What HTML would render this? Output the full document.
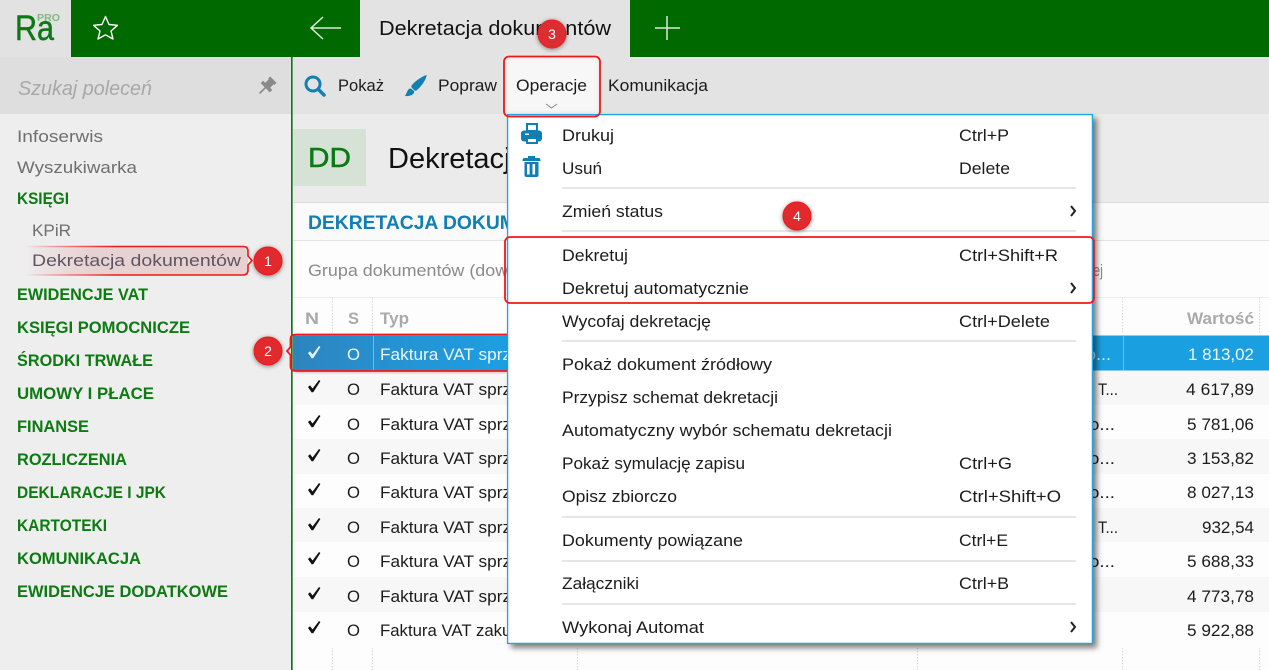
<!DOCTYPE html>
<html lang="pl"><head><meta charset="utf-8"><title>Dekretacja dokumentów</title>
<style>
html,body{margin:0;padding:0;width:1269px;height:670px;overflow:hidden;background:#fff}
svg{display:block}
text{font-family:"Liberation Sans",sans-serif;font-size:17px;fill:#1c1c1c;white-space:pre}
.g{fill:#0d7a12;font-weight:bold;font-size:16.5px}
.s{fill:#6f6f6f}
.h{fill:#aaa;font-weight:bold}
.w{fill:#eef5fb}
.n{fill:#fff;font-size:14px;text-anchor:middle}
</style></head><body>
<svg width="1269" height="670" viewBox="0 0 1269 670" xmlns="http://www.w3.org/2000/svg">
<defs>
<filter id="ms" x="-5%" y="-5%" width="112%" height="112%"><feDropShadow dx="4" dy="4" stdDeviation="3" flood-color="#000" flood-opacity=".5"/></filter>
<filter id="cs" x="-50%" y="-50%" width="200%" height="200%"><feDropShadow dx="0" dy="1" stdDeviation="2.5" flood-color="#000" flood-opacity=".45"/></filter>
<filter id="gl" x="-10%" y="-30%" width="120%" height="160%"><feGaussianBlur stdDeviation="3"/></filter>
<filter id="rg" x="-5%" y="-30%" width="110%" height="160%"><feGaussianBlur stdDeviation="1.500"/></filter>
<linearGradient id="fd" x1="0" x2="1" y1="0" y2="0"><stop offset="0" stop-color="#e8c8c8" stop-opacity="0"/><stop offset=".3" stop-color="#e6d2d2"/><stop offset="1" stop-color="#e6d0d0"/></linearGradient>
<linearGradient id="fl" x1="0" x2="1" y1="0" y2="0"><stop offset="0" stop-color="#f01818" stop-opacity="0"/><stop offset=".4" stop-color="#f01818"/></linearGradient>
<linearGradient id="sel" gradientUnits="userSpaceOnUse" x1="293" x2="507" y1="0" y2="0"><stop offset="0" stop-color="#2e84bd"/><stop offset=".5" stop-color="#2593d3"/><stop offset="1" stop-color="#1c9fe2"/></linearGradient>
<clipPath id="rowclip"><rect x="293" y="296" width="976" height="374"/></clipPath>
<path id="ck" d="M308 387 L310 385.300 L312.600 388.500 L319 380 L320.400 381 L313.200 392.300 L311.600 392.300 Z"/>
</defs>

<!-- top bar -->
<rect width="1269" height="57" fill="#006a00"/>
<rect width="71" height="57" fill="#e2e2e2"/>
<text x="15" y="40" style="font-size:35px;fill:#0b7a14;stroke:#0b7a14;stroke-width:.5" textLength="39" lengthAdjust="spacingAndGlyphs">Ra</text>
<text x="37" y="21" style="font-size:10.5px;font-weight:bold;fill:#7fbb7f" textLength="23" lengthAdjust="spacingAndGlyphs">PRO</text>
<path d="M105.500 16.500 L109 24.500 L117.500 25.300 L111 31 L113 39 L105.500 34.800 L98 39 L100 31 L93.500 25.300 L102 24.500 Z" fill="none" stroke="#fff" stroke-width="1.400" stroke-linejoin="round"/>
<rect x="360" width="270" height="57" fill="#e3e3e3"/>
<path d="M341 28 H311.500 M323 17 L311 28 L323 39" fill="none" stroke="#dcebdc" stroke-width="1.500"/>
<path d="M667 16 V40 M655 28 H680" fill="none" stroke="#dcebdc" stroke-width="1.500"/>
<text x="379" y="35" style="font-size:20px;fill:#111" textLength="232" lengthAdjust="spacingAndGlyphs">Dekretacja dokumentów</text>

<!-- sidebar -->
<rect y="57" width="291" height="613" fill="#eeeeee"/>
<rect y="57" width="291" height="57" fill="#dedede"/>
<rect x="291" y="57" width="1.700" height="613" fill="#13791a"/>
<text x="18" y="95" style="font-size:20px;font-style:italic;fill:#a8a8a8" textLength="134" lengthAdjust="spacingAndGlyphs">Szukaj poleceń</text>
<g transform="rotate(45 267 86)" fill="#8a8a8a"><rect x="262.500" y="77" width="9" height="3"/><rect x="263.500" y="79" width="7" height="7"/><rect x="260.500" y="85" width="13" height="3.500"/><rect x="266.200" y="88" width="1.600" height="8.500"/></g>
<text x="17" y="142" class="s" textLength="86" lengthAdjust="spacingAndGlyphs">Infoserwis</text>
<text x="17" y="173" class="s" textLength="120" lengthAdjust="spacingAndGlyphs">Wyszukiwarka</text>
<text x="17" y="204" class="g" textLength="52" lengthAdjust="spacingAndGlyphs">KSIĘGI</text>
<text x="32" y="236" class="s" textLength="39" lengthAdjust="spacingAndGlyphs">KPiR</text>
<rect x="24" y="246" width="224" height="29" fill="url(#fd)"/>
<path d="M24 246.500 H243 Q248 246.500 248 251 V256 L252 260.500 L248 265 V270 Q248 275 243 275 H24" fill="none" stroke="url(#fl)" stroke-width="1.600"/>
<text x="32" y="266" fill="#5f5560" style="fill:#5f5560" textLength="209" lengthAdjust="spacingAndGlyphs">Dekretacja dokumentów</text>
<text x="17" y="300" class="g" textLength="131" lengthAdjust="spacingAndGlyphs">EWIDENCJE VAT</text>
<text x="17" y="333" class="g" textLength="173" lengthAdjust="spacingAndGlyphs">KSIĘGI POMOCNICZE</text>
<text x="17" y="366" class="g" textLength="136" lengthAdjust="spacingAndGlyphs">ŚRODKI TRWAŁE</text>
<text x="17" y="399" class="g" textLength="137" lengthAdjust="spacingAndGlyphs">UMOWY I PŁACE</text>
<text x="17" y="432" class="g" textLength="72" lengthAdjust="spacingAndGlyphs">FINANSE</text>
<text x="17" y="465" class="g" textLength="110" lengthAdjust="spacingAndGlyphs">ROZLICZENIA</text>
<text x="17" y="498" class="g" textLength="149" lengthAdjust="spacingAndGlyphs">DEKLARACJE I JPK</text>
<text x="17" y="531" class="g" textLength="90" lengthAdjust="spacingAndGlyphs">KARTOTEKI</text>
<text x="17" y="564" class="g" textLength="124" lengthAdjust="spacingAndGlyphs">KOMUNIKACJA</text>
<text x="17" y="597" class="g" textLength="211" lengthAdjust="spacingAndGlyphs">EWIDENCJE DODATKOWE</text>

<!-- toolbar + header -->
<rect x="293" y="57" width="976" height="57" fill="#e3e3e3"/>
<rect x="293" y="114" width="976" height="88" fill="#ebebeb"/>
<rect x="293" y="202" width="976" height="1" fill="#dcdcdc"/>
<rect x="293" y="203" width="976" height="37" fill="#fafafa"/>
<rect x="293" y="240" width="976" height="1" fill="#e4e4e4"/>
<rect x="293" y="241" width="976" height="429" fill="#fdfdfd"/>
<rect x="293" y="297" width="976" height="1" fill="#ececec"/>
<circle cx="313" cy="84" r="7" fill="none" stroke="#1380b5" stroke-width="3"/>
<path d="M318.500 89.500 L324 95" stroke="#1380b5" stroke-width="3.500" stroke-linecap="round"/>
<text x="338" y="91" textLength="46" lengthAdjust="spacingAndGlyphs">Pokaż</text>
<path d="M426.500 75 C424 75.500 416 80 412 85 C411 86 411 87 412 88 L414 90 C415 91 416 91 417 90 C422 86 427 78 426.500 75 Z M411 88.500 C407 88.500 407.500 92.500 405 96 C410 96.500 415 94.500 414 91 Z" fill="#1380b5"/>
<text x="438" y="91" textLength="59" lengthAdjust="spacingAndGlyphs">Popraw</text>
<rect x="505" y="57" width="94" height="57" fill="#f7f7f7" filter="url(#gl)"/>
<text x="516" y="91" textLength="71" lengthAdjust="spacingAndGlyphs">Operacje</text>
<path d="M546 104 L551.500 108 L557 104" fill="none" stroke="#888" stroke-width="1"/>
<text x="608" y="91" textLength="100" lengthAdjust="spacingAndGlyphs">Komunikacja</text>
<rect x="293" y="129" width="73" height="57" fill="#d6e2d6"/>
<text x="308" y="167" style="font-size:28px;fill:#0b7a14;stroke:#0b7a14;stroke-width:.5" textLength="43" lengthAdjust="spacingAndGlyphs">DD</text>
<text x="388" y="168" style="font-size:29px;fill:#111">Dekretacja dokumentów</text>
<text x="308" y="229" style="font-size:19.3px;font-weight:bold;fill:#0f7fb5">DEKRETACJA DOKUMENTÓW</text>
<text x="308" y="276" style="fill:#8a8a8a" textLength="240" lengthAdjust="spacingAndGlyphs">Grupa dokumentów (dowolna)</text>
<text x="1093" y="276" style="fill:#8a8a8a" textLength="10" lengthAdjust="spacingAndGlyphs">ej</text>

<!-- table -->
<g clip-path="url(#rowclip)">
<rect x="293" y="370" width="976" height="35" fill="#f7f7f7"/>
<rect x="293" y="439" width="976" height="35" fill="#f7f7f7"/>
<rect x="293" y="508" width="976" height="34" fill="#f7f7f7"/>
<rect x="293" y="577" width="976" height="35" fill="#f7f7f7"/>
<rect x="293" y="335.500" width="976" height="35" fill="#1a9fe0"/>
<rect x="293" y="335.500" width="214" height="35" fill="url(#sel)"/>
<rect x="373" y="336" width="1" height="34" fill="#6fbfea"/>
<rect x="1123" y="336" width="1" height="34" fill="#6fbfea"/>
<path d="M332.500 298 V333 M372.500 298 V333 M1122.500 298 V333 M1259.500 298 V333 M332.500 648 V670 M372.500 648 V670 M577.500 648 V670 M917.500 648 V670 M1122.500 648 V670 M1259.500 648 V670" stroke="#d6d6d6" stroke-dasharray="1.500 1.500" fill="none"/>
<text x="305" y="324" class="h" textLength="14" lengthAdjust="spacingAndGlyphs">N</text>
<text x="348" y="324" class="h" textLength="11" lengthAdjust="spacingAndGlyphs">S</text>
<text x="380" y="324" class="h" textLength="29" lengthAdjust="spacingAndGlyphs">Typ</text>
<text x="1187" y="324" class="h" textLength="67" lengthAdjust="spacingAndGlyphs">Wartość</text>

<use href="#ck" y="-34" fill="#e8f4fb"/>
<use href="#ck" y="0" fill="#111"/>
<use href="#ck" y="35" fill="#111"/>
<use href="#ck" y="69" fill="#111"/>
<use href="#ck" y="103" fill="#111"/>
<use href="#ck" y="138" fill="#111"/>
<use href="#ck" y="172" fill="#111"/>
<use href="#ck" y="207" fill="#111"/>
<use href="#ck" y="241" fill="#111"/>

<text x="347" y="360" class="w" textLength="13" lengthAdjust="spacingAndGlyphs">O</text>
<text x="347" y="395" textLength="13" lengthAdjust="spacingAndGlyphs">O</text>
<text x="347" y="430" textLength="13" lengthAdjust="spacingAndGlyphs">O</text>
<text x="347" y="464" textLength="13" lengthAdjust="spacingAndGlyphs">O</text>
<text x="347" y="498" textLength="13" lengthAdjust="spacingAndGlyphs">O</text>
<text x="347" y="533" textLength="13" lengthAdjust="spacingAndGlyphs">O</text>
<text x="347" y="567" textLength="13" lengthAdjust="spacingAndGlyphs">O</text>
<text x="347" y="602" textLength="13" lengthAdjust="spacingAndGlyphs">O</text>
<text x="347" y="636" textLength="13" lengthAdjust="spacingAndGlyphs">O</text>

<text x="380" y="360" class="w" textLength="177" lengthAdjust="spacingAndGlyphs">Faktura VAT sprzedaży</text>
<text x="380" y="395" textLength="177" lengthAdjust="spacingAndGlyphs">Faktura VAT sprzedaży</text>
<text x="380" y="430" textLength="177" lengthAdjust="spacingAndGlyphs">Faktura VAT sprzedaży</text>
<text x="380" y="464" textLength="177" lengthAdjust="spacingAndGlyphs">Faktura VAT sprzedaży</text>
<text x="380" y="498" textLength="177" lengthAdjust="spacingAndGlyphs">Faktura VAT sprzedaży</text>
<text x="380" y="533" textLength="177" lengthAdjust="spacingAndGlyphs">Faktura VAT sprzedaży</text>
<text x="380" y="567" textLength="177" lengthAdjust="spacingAndGlyphs">Faktura VAT sprzedaży</text>
<text x="380" y="602" textLength="177" lengthAdjust="spacingAndGlyphs">Faktura VAT sprzedaży</text>
<text x="380" y="636" textLength="150" lengthAdjust="spacingAndGlyphs">Faktura VAT zakupu</text>

<text x="1086" y="360" class="w" textLength="25" lengthAdjust="spacingAndGlyphs">o...</text>
<text x="1098" y="395" textLength="20" lengthAdjust="spacingAndGlyphs">T...</text>
<text x="1089" y="430" textLength="26" lengthAdjust="spacingAndGlyphs">o...</text>
<text x="1089" y="464" textLength="26" lengthAdjust="spacingAndGlyphs">o...</text>
<text x="1089" y="498" textLength="26" lengthAdjust="spacingAndGlyphs">o...</text>
<text x="1098" y="533" textLength="20" lengthAdjust="spacingAndGlyphs">T...</text>
<text x="1089" y="567" textLength="26" lengthAdjust="spacingAndGlyphs">o...</text>

<text x="1188" y="360" class="w" textLength="66" lengthAdjust="spacingAndGlyphs">1 813,02</text>
<text x="1186" y="395" textLength="68" lengthAdjust="spacingAndGlyphs">4 617,89</text>
<text x="1187" y="430" textLength="67" lengthAdjust="spacingAndGlyphs">5 781,06</text>
<text x="1187" y="464" textLength="67" lengthAdjust="spacingAndGlyphs">3 153,82</text>
<text x="1187" y="498" textLength="67" lengthAdjust="spacingAndGlyphs">8 027,13</text>
<text x="1202" y="533" textLength="52" lengthAdjust="spacingAndGlyphs">932,54</text>
<text x="1187" y="567" textLength="67" lengthAdjust="spacingAndGlyphs">5 688,33</text>
<text x="1187" y="602" textLength="67" lengthAdjust="spacingAndGlyphs">4 773,78</text>
<text x="1187" y="636" textLength="67" lengthAdjust="spacingAndGlyphs">5 922,88</text>
</g>

<!-- annotation 2 -->
<rect x="295" y="371" width="212" height="2" fill="#f5a0a0" filter="url(#rg)"/>
<path d="M507 334.500 H296 Q290.500 334.500 290.500 339 V347 L287 351 L290.500 355 V366 Q290.500 371 296 371 H507" fill="none" stroke="#f01818" stroke-width="1.800"/>

<!-- menu -->
<rect x="507" y="114" width="586" height="530" fill="#fff" filter="url(#ms)"/>
<rect x="507.600" y="114.600" width="584.800" height="528.800" fill="none" stroke="#1fa5e6" stroke-width="1.300"/>

<rect x="521" y="130.500" width="21" height="11" rx="3" fill="#0f7fb5"/>
<rect x="527" y="124" width="10" height="7" fill="#fff" stroke="#0f7fb5" stroke-width="2"/>
<rect x="527" y="138" width="10" height="5" fill="#fff" stroke="#0f7fb5" stroke-width="2"/>
<rect x="525" y="133.500" width="4" height="1.500" fill="#fff"/>
<path d="M528 156 H535 V158 H539 Q540.500 158 540.500 161 H522.500 Q522.500 158 524 158 H528 Z M524.500 162 H538.500 V175 Q538.500 177 536.500 177 H526.500 Q524.500 177 524.500 175 Z" fill="#0f7fb5"/>
<rect x="527" y="164" width="2.600" height="10.500" fill="#fff"/>
<rect x="532.500" y="164" width="2.600" height="10.500" fill="#fff"/>

<rect x="562" y="187" width="514" height="2" fill="#e6e6e6"/>
<rect x="562" y="230" width="514" height="2" fill="#e6e6e6"/>
<rect x="562" y="340" width="514" height="2" fill="#e6e6e6"/>
<rect x="562" y="516" width="514" height="2" fill="#e6e6e6"/>
<rect x="562" y="560" width="514" height="2" fill="#e6e6e6"/>
<rect x="562" y="603" width="514" height="2" fill="#e6e6e6"/>

<text x="562" y="141" textLength="52" lengthAdjust="spacingAndGlyphs">Drukuj</text>
<text x="562" y="174" textLength="40" lengthAdjust="spacingAndGlyphs">Usuń</text>
<text x="562" y="217" textLength="101" lengthAdjust="spacingAndGlyphs">Zmień status</text>
<text x="562" y="261" textLength="66" lengthAdjust="spacingAndGlyphs">Dekretuj</text>
<text x="562" y="294" textLength="187" lengthAdjust="spacingAndGlyphs">Dekretuj automatycznie</text>
<text x="562" y="327" textLength="149" lengthAdjust="spacingAndGlyphs">Wycofaj dekretację</text>
<text x="562" y="370" textLength="210" lengthAdjust="spacingAndGlyphs">Pokaż dokument źródłowy</text>
<text x="562" y="403" textLength="216" lengthAdjust="spacingAndGlyphs">Przypisz schemat dekretacji</text>
<text x="562" y="436" textLength="330" lengthAdjust="spacingAndGlyphs">Automatyczny wybór schematu dekretacji</text>
<text x="562" y="469" textLength="183" lengthAdjust="spacingAndGlyphs">Pokaż symulację zapisu</text>
<text x="562" y="502" textLength="115" lengthAdjust="spacingAndGlyphs">Opisz zbiorczo</text>
<text x="562" y="546" textLength="181" lengthAdjust="spacingAndGlyphs">Dokumenty powiązane</text>
<text x="562" y="589" textLength="77" lengthAdjust="spacingAndGlyphs">Załączniki</text>
<text x="562" y="633" textLength="142" lengthAdjust="spacingAndGlyphs">Wykonaj Automat</text>

<text x="959" y="141" textLength="50" lengthAdjust="spacingAndGlyphs">Ctrl+P</text>
<text x="959" y="174" textLength="51" lengthAdjust="spacingAndGlyphs">Delete</text>
<text x="959" y="261" textLength="99" lengthAdjust="spacingAndGlyphs">Ctrl+Shift+R</text>
<text x="959" y="327" textLength="91" lengthAdjust="spacingAndGlyphs">Ctrl+Delete</text>
<text x="959" y="469" textLength="53" lengthAdjust="spacingAndGlyphs">Ctrl+G</text>
<text x="959" y="502" textLength="102" lengthAdjust="spacingAndGlyphs">Ctrl+Shift+O</text>
<text x="959" y="546" textLength="49" lengthAdjust="spacingAndGlyphs">Ctrl+E</text>
<text x="959" y="589" textLength="50" lengthAdjust="spacingAndGlyphs">Ctrl+B</text>

<path d="M1071 206 L1075 211 L1071 216 M1071 283 L1075 288 L1071 293 M1071 622 L1075 627 L1071 632" fill="none" stroke="#222" stroke-width="2"/>

<!-- annotations -->
<rect x="504" y="56.500" width="96" height="60" rx="5" fill="none" stroke="#f01818" stroke-width="1.800"/>
<rect x="505" y="237" width="589" height="66" rx="5" fill="none" stroke="#f01818" stroke-width="1.800"/>

<circle cx="268" cy="261" r="14" fill="#e02a2e" stroke="#f01818" filter="url(#cs)"/>
<text x="268" y="266" class="n">1</text>
<circle cx="268" cy="351" r="14" fill="#e02a2e" stroke="#f01818" filter="url(#cs)"/>
<text x="268" y="356" class="n">2</text>
<circle cx="552" cy="34" r="14" fill="#dc2f33" stroke="#e82020" filter="url(#cs)"/>
<text x="552" y="39" class="n">3</text>
<circle cx="797" cy="216" r="14" fill="#e02a2e" stroke="#f01818" filter="url(#cs)"/>
<text x="797" y="221" class="n">4</text>
</svg>
</body></html>
